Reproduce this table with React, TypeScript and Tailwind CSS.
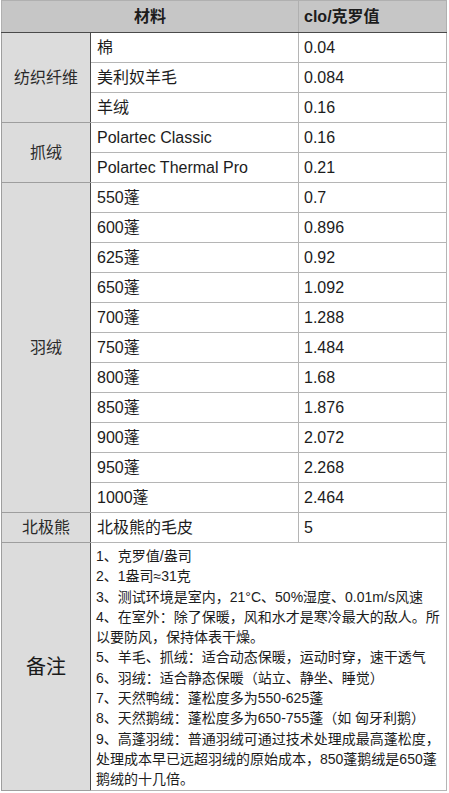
const groups = [
  {
    label: '纺织纤维',
    rows: [
      ['棉', '0.04'],
      ['美利奴羊毛', '0.084'],
      ['羊绒', '0.16'],
    ],
  },
  {
    label: '抓绒',
    rows: [
      ['Polartec Classic', '0.16'],
      ['Polartec Thermal Pro', '0.21'],
    ],
  },
  {
    label: '羽绒',
    rows: [
      ['550蓬', '0.7'],
      ['600蓬', '0.896'],
      ['625蓬', '0.92'],
      ['650蓬', '1.092'],
      ['700蓬', '1.288'],
      ['750蓬', '1.484'],
      ['800蓬', '1.68'],
      ['850蓬', '1.876'],
      ['900蓬', '2.072'],
      ['950蓬', '2.268'],
      ['1000蓬', '2.464'],
    ],
  },
  {
    label: '北极熊',
    rows: [['北极熊的毛皮', '5']],
  },
];

// wrapped notes are split by hand so the lines break where the picture does
const notes = [
  ['1、克罗值/盎司'],
  ['2、1盎司≈31克'],
  ['3、测试环境是室内，21°C、50%湿度、0.01m/s风速'],
  ['4、在室外：除了保暖，风和水才是寒冷最大的敌人。所', '以要防风，保持体表干燥。'],
  ['5、羊毛、抓绒：适合动态保暖，运动时穿，速干透气'],
  ['6、羽绒：适合静态保暖（站立、静坐、睡觉）'],
  ['7、天然鸭绒：蓬松度多为550-625蓬'],
  ['8、天然鹅绒：蓬松度多为650-755蓬（如 匈牙利鹅）'],
  [
    '9、高蓬羽绒：普通羽绒可通过技术处理成最高蓬松度，',
    '处理成本早已远超羽绒的原始成本，850蓬鹅绒是650蓬',
    '鹅绒的十几倍。',
  ],
];

export default function App() {
  return (
    <div className="bg-white w-[449px] h-[793px] pl-[1px] font-['Liberation_Sans','Noto_Sans_CJK_SC',sans-serif] text-[#1c1c1c]">
      <table className="table-fixed border-collapse w-[445px] border border-[#b5b5b5]">
        <colgroup>
          <col className="w-[89px]" />
          <col className="w-[208px]" />
          <col className="w-[148px]" />
        </colgroup>
        <thead>
          <tr className="h-[32px] bg-[#c6c6c6]">
            <th
              colSpan={2}
              className="border border-[#b0b0b0] border-b-[#4a4a4a] text-[16px] font-bold text-center"
            >
              材料
            </th>
            <th className="border border-[#b0b0b0] border-b-[#4a4a4a] text-[16px] font-bold text-left pl-[5px]">
              clo/克罗值
            </th>
          </tr>
        </thead>
        <tbody>
          {groups.map((g) =>
            g.rows.map((r, i) => (
              <tr key={g.label + i} className="h-[30px]">
                {i === 0 && (
                  <td
                    rowSpan={g.rows.length}
                    className="bg-[#dcdcdc] border border-[#9e9e9e] border-r-[#4a4a4a] text-center text-[16px] text-[#2a2a2a]"
                  >
                    {g.label}
                  </td>
                )}
                <td className="border border-[#b5b5b5] text-[16px] pl-[6px] whitespace-nowrap">{r[0]}</td>
                <td className="border border-[#b5b5b5] text-[16px] pl-[5px]">{r[1]}</td>
              </tr>
            ))
          )}
          <tr className="h-[248px]">
            <td className="bg-[#dcdcdc] border border-[#9e9e9e] border-r-[#4a4a4a] text-center text-[20px] text-[#1a1a1a]">
              备注
            </td>
            <td colSpan={2} className="border border-[#b5b5b5] align-top pl-[5px] pt-[3px] text-[14px] leading-[20.3px]">
              {notes.map((lines, i) => (
                <div key={i} className="whitespace-nowrap">
                  {lines.map((l, j) => (
                    <div key={j}>{l}</div>
                  ))}
                </div>
              ))}
            </td>
          </tr>
        </tbody>
      </table>
    </div>
  );
}
